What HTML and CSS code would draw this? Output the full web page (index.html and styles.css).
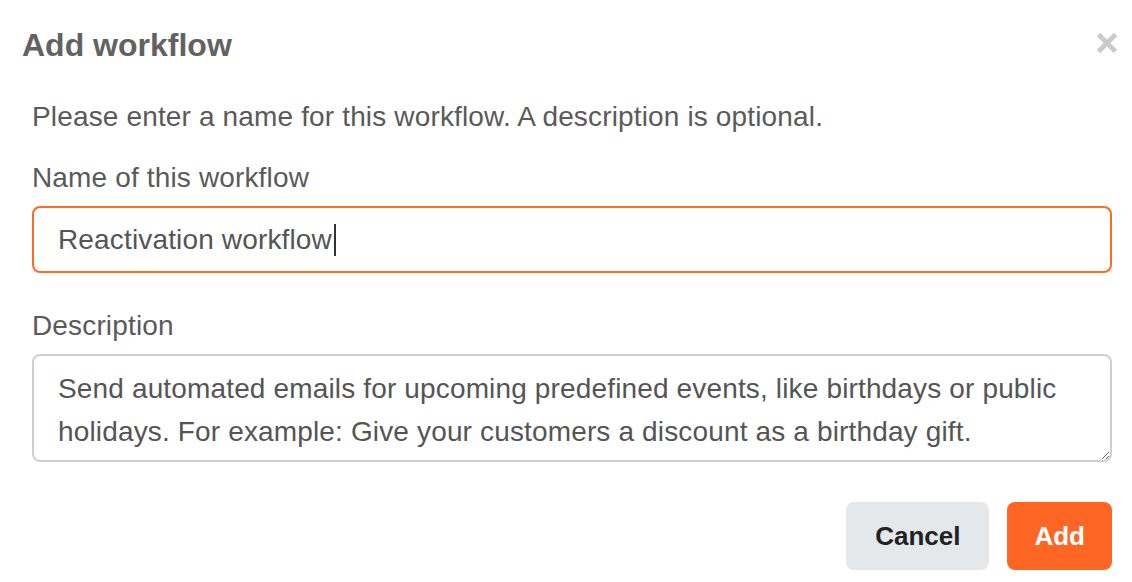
FILE: index.html
```html
<!DOCTYPE html>
<html lang="en">
<head>
<meta charset="utf-8">
<title>Add workflow</title>
<link rel="stylesheet" href="styles.css">
</head>
<body>
<div class="dialog">
  <div class="dialog-header">
    <h1 class="dialog-title">Add workflow</h1>
    <button class="close-btn" aria-label="Close">
      <svg width="24" height="24" viewBox="0 0 24 24"><path d="M3.5 3.5 L20.5 20.5 M20.5 3.5 L3.5 20.5" stroke="#cbcbcb" stroke-width="4.8" stroke-linecap="butt" fill="none"/></svg>
    </button>
  </div>
  <div class="dialog-body">
    <p class="intro">Please enter a name for this workflow. A description is optional.</p>
    <div class="field">
      <label class="field-label">Name of this workflow</label>
      <div class="text-input" role="textbox">Reactivation workflow<span class="caret"></span></div>
    </div>
    <div class="field">
      <label class="field-label" for="desc">Description</label>
      <textarea id="desc" class="text-area">Send automated emails for upcoming predefined events, like birthdays or public holidays. For example: Give your customers a discount as a birthday gift.</textarea>
    </div>
  </div>
  <div class="dialog-footer">
    <button class="btn btn-cancel">Cancel</button>
    <button class="btn btn-primary">Add</button>
  </div>
</div>
</body>
</html>
```
FILE: styles.css
```css
* { box-sizing: border-box; }
html, body {
  margin: 0;
  padding: 0;
  background: #ffffff;
  font-family: "Liberation Sans", Arial, sans-serif;
}
.dialog {
  width: 1132px;
  height: 582px;
  overflow: hidden;
}
.dialog-header {
  display: flex;
  justify-content: space-between;
  align-items: flex-start;
  padding: 25px 13px 0 22px;
}
.dialog-title {
  margin: 0;
  font-size: 32px;
  line-height: 40px;
  font-weight: 700;
  color: #626262;
}
.close-btn {
  margin-top: 6px;
  padding: 0;
  border: 0;
  background: transparent;
  width: 24px;
  height: 24px;
  display: block;
}
.close-btn svg { display: block; }
.dialog-body {
  padding: 34px 20px 0 32px;
}
.intro {
  margin: 0 0 25px 0;
  font-size: 28px;
  line-height: 36px;
  letter-spacing: 0.15px;
  color: #5a5a5a;
}
.field {
  display: flex;
  flex-direction: column;
  gap: 10px;
  margin-bottom: 35px;
}
.field:last-child { margin-bottom: 0; }
.field-label {
  font-size: 28px;
  line-height: 36px;
  letter-spacing: 0.15px;
  color: #5a5a5a;
}
.text-input {
  height: 67px;
  border: 2px solid #ff6a24;
  border-radius: 8px;
  padding: 0 24px;
  display: flex;
  align-items: center;
  font-size: 28px;
  letter-spacing: 0.15px;
  color: #555555;
  white-space: pre;
}
.caret {
  display: inline-block;
  width: 2px;
  height: 32px;
  margin-left: 2px;
  background: #333333;
}
.text-area {
  display: block;
  width: 100%;
  height: 108px;
  border: 2px solid #cfcfcf;
  border-radius: 8px;
  padding: 11px 24px 7px 24px;
  font-family: "Liberation Sans", Arial, sans-serif;
  font-size: 28px;
  line-height: 43px;
  letter-spacing: 0.15px;
  color: #555555;
  overflow: hidden;
  resize: vertical;
  margin: 0;
  outline: none;
}
.dialog-footer {
  display: flex;
  justify-content: flex-end;
  gap: 18px;
  padding: 40px 20px 0 32px;
}
.btn {
  height: 68px;
  border: 0;
  border-radius: 8px;
  padding: 0 28px;
  font-family: "Liberation Sans", Arial, sans-serif;
  font-size: 26px;
  font-weight: 700;
  cursor: pointer;
}
.btn-cancel {
  background: #e4e8eb;
  color: #222222;
  padding: 0 29px;
}
.btn-primary {
  background: #ff6624;
  color: #ffffff;
  padding: 0 27px;
}
```
